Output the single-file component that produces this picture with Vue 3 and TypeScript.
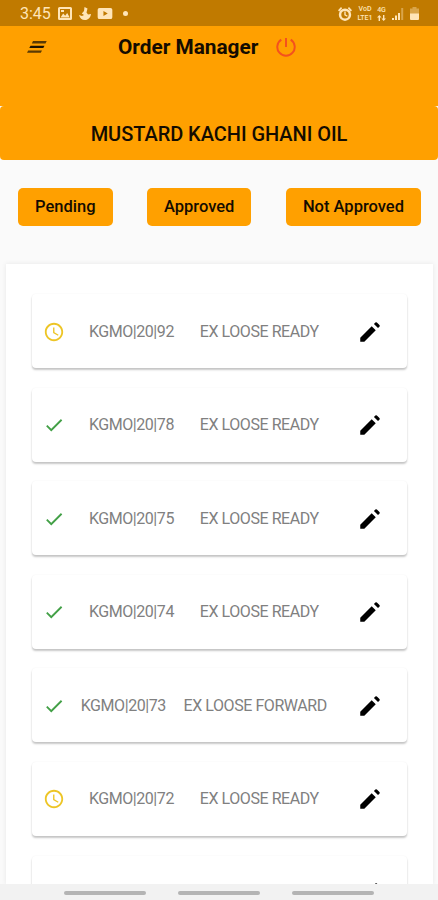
<script setup lang="ts">
type Status = 'pending' | 'approved'

interface Order {
  id: string
  type: string
  status: Status
}

const filters: string[] = ['Pending', 'Approved', 'Not Approved']

const pencil =
  'M3 17.250V21h3.750L17.310 10.440l-3.750-3.750L3 17.250zM20.710 7.040a1 1 0 0 0 0-1.410l-2.340-2.340a1 1 0 0 0-1.410 0l-1.330 1.330 3.750 3.750 1.330-1.330z'

const orders: Order[] = [
  { id: 'KGMO|20|92', type: 'EX LOOSE READY', status: 'pending' },
  { id: 'KGMO|20|78', type: 'EX LOOSE READY', status: 'approved' },
  { id: 'KGMO|20|75', type: 'EX LOOSE READY', status: 'approved' },
  { id: 'KGMO|20|74', type: 'EX LOOSE READY', status: 'approved' },
  { id: 'KGMO|20|73', type: 'EX LOOSE FORWARD', status: 'approved' },
  { id: 'KGMO|20|72', type: 'EX LOOSE READY', status: 'pending' },
]
</script>

<template>
  <div class="screen">
    <div class="status-bar">
      <span class="time">3:45</span>
      <svg class="s-image" viewBox="0 0 14 13"><path fill-rule="evenodd" d="M1.500 0h11A1.500 1.500 0 0 1 14 1.500v10a1.500 1.500 0 0 1-1.500 1.500h-11A1.500 1.500 0 0 1 0 11.500v-10A1.500 1.500 0 0 1 1.500 0zM2 2v9h10V2zM2.500 10.500l2.700-4 2 2.300 2-2.800 2.500 4.500zM3 3h3v2H3z" /></svg>
      <svg class="s-app" viewBox="0 0 12 13"><path d="M5.500 0 8.500 1.500 7.500 5.500 9 7.500 12 7c-.5 3.500-2.700 6-6 6S.8 11 0 8l3 1 2-1-2.200-1.500L5 4z" /></svg>
      <svg class="s-video" viewBox="0 0 16 12"><path fill-rule="evenodd" d="M2 0h12a2 2 0 0 1 2 2v8a2 2 0 0 1-2 2H2a2 2 0 0 1-2-2V2a2 2 0 0 1 2-2zm4.300 3.200v5.600L11 6z" /></svg>
      <span class="dot"></span>
      <span class="spacer"></span>
      <svg class="s-alarm" viewBox="0 0 14 14"><path fill-rule="evenodd" d="M7 1.500a6.200 6.200 0 1 1 0 12.400A6.200 6.200 0 0 1 7 1.500zm0 2.500a3.700 3.700 0 1 0 0 7.400A3.700 3.700 0 0 0 7 4zM6.300 4.500h1.400v3l2 1.300-.7 1-2.700-1.600zM0 3.200 3 .1l1.200 1.200L1.200 4.400zM14 3.200 11 .1 9.800 1.300l3 3.100z" /></svg>
      <span class="net volte"><b>VoD</b><b>LTE1</b></span>
      <span class="net data">
        <b>4G</b>
        <svg viewBox="0 0 9 6"><path d="M2.300 0 4.600 2.500H3V6H1.600V2.500H0zM6.700 6 4.400 3.500H6V0h1.400v3.500H9z" /></svg>
      </span>
      <svg class="s-signal" viewBox="0 0 12 12"><path d="M0 10h2v2H0zM3 7.500h2V12H3zM6 5h2v7H6z" /><path opacity=".4" d="M9.200 0h2v12h-2z" /></svg>
      <svg class="s-battery" viewBox="0 0 9 13"><path opacity=".4" d="M2.500 0h4v1.500H9V7H0V1.500h2.500z" /><path d="M0 6.500h9V12a1 1 0 0 1-1 1H1a1 1 0 0 1-1-1z" /></svg>
    </div>

    <header class="app-bar">
      <svg class="menu" viewBox="0 0 20 12"><path d="M6 0h13.700l-1.200 2.400H4.800zM1.200 9.400H15l-1.200 2.400H0z" /><path class="mid" d="M3.500 4.700h14l-1.200 2.400h-14z" /></svg>
      <h1>Order Manager</h1>
      <svg class="power" viewBox="0 0 20 20"><path d="M10 1v9M5.300 2.700a8.700 8.700 0 1 0 9.400 0" /></svg>
    </header>

    <h2 class="product">MUSTARD KACHI GHANI OIL</h2>

    <nav class="filters">
      <button v-for="f in filters" :key="f" type="button">{{ f }}</button>
    </nav>

    <main class="panel">
      <article v-for="o in orders" :key="o.id" class="card">
        <svg v-if="o.status === 'pending'" class="state pending" viewBox="0 0 24 24"><path d="M11.990 2C6.470 2 2 6.480 2 12s4.470 10 9.990 10C17.520 22 22 17.520 22 12S17.520 2 11.990 2zM12 20c-4.420 0-8-3.580-8-8s3.580-8 8-8 8 3.580 8 8-3.580 8-8 8zm.5-13H11v6l5.250 3.150.75-1.230-4.500-2.670z" /></svg>
        <svg v-else class="state approved" viewBox="0 0 24 24"><path d="M9 16.170 4.830 12l-1.420 1.410L9 19 21 7l-1.410-1.410z" /></svg>
        <div class="info">
          <span>{{ o.id }}</span>
          <span>{{ o.type }}</span>
        </div>
        <svg class="edit" viewBox="0 0 24 24"><path :d="pencil" /></svg>
      </article>
      <article class="card">
        <div class="info"></div>
        <svg class="edit" viewBox="0 0 24 24"><path :d="pencil" /></svg>
      </article>
    </main>

    <footer class="gesture-bar"><i></i><i></i><i></i></footer>
  </div>
</template>

<style>
body {
  margin: 0;
}
</style>

<style scoped>
.screen {
  display: flex;
  flex-direction: column;
  width: 438px;
  height: 900px;
  overflow: hidden;
  background: #fafafa;
  font-family: Roboto, "Liberation Sans", sans-serif;
}

svg {
  display: block;
  flex: none;
}

.status-bar {
  display: flex;
  align-items: center;
  flex: none;
  box-sizing: border-box;
  height: 26px;
  padding: 1px 19px 0 20px;
  background: #c07a00;
  color: #ffe5b8;
  fill: #ffe5b8;
}

.time {
  width: 38px;
  font-size: 16px;
  line-height: 24px;
}

.s-image { width: 14px; height: 13px; }
.s-app { width: 12px; height: 13px; margin-left: 7px; }
.s-video { width: 16px; height: 11px; margin-left: 6px; }

.dot {
  width: 5px;
  height: 5px;
  margin-left: 10px;
  border-radius: 50%;
  background: #ffe5b8;
}

.spacer { flex: 1; }
.s-alarm { width: 14px; height: 14px; }

.net {
  display: flex;
  flex-direction: column;
  align-items: center;
  font-size: 7px;
  line-height: 8.500px;
}

.net b { font-weight: 500; }
.volte { width: 18px; margin-left: 4px; }
.data { width: 11px; margin-left: 2px; }
.data svg { width: 9px; height: 6px; }
.s-signal { width: 12px; height: 12px; margin-left: 5px; }
.s-battery { width: 9px; height: 13px; margin-left: 6px; }

.app-bar {
  display: flex;
  align-items: center;
  flex: none;
  box-sizing: border-box;
  height: 80px;
  padding: 0 27px 38px;
  background: #ffa000;
}

.menu {
  width: 20px;
  height: 12px;
  fill: #5a3a03;
}

.menu .mid { fill: #1c1200; }

h1 {
  width: 158px;
  margin: 0 0 0 71px;
  font-size: 20.800px;
  font-weight: 700;
  line-height: 28px;
  white-space: nowrap;
  color: #140c00;
}

.power {
  width: 20px;
  height: 20px;
  fill: none;
  stroke: #f4511e;
  stroke-width: 2;
}

.product {
  flex: none;
  height: 54px;
  margin: 0;
  border-radius: 4px;
  background: #ffa000;
  color: #140c00;
  font-size: 20px;
  font-weight: 500;
  letter-spacing: -0.050px;
  line-height: 56px;
  text-align: center;
}

.filters {
  display: flex;
  justify-content: space-between;
  flex: none;
  padding: 28px 17px 38px 18px;
}

.filters button {
  height: 38px;
  padding: 0 17px;
  border: 0;
  border-radius: 5px;
  background: #ffa000;
  color: #140c00;
  font: 500 16.500px/38px Roboto, "Liberation Sans", sans-serif;
  white-space: nowrap;
}

.panel {
  display: flex;
  flex-direction: column;
  gap: 19.600px;
  flex: 1;
  min-height: 0;
  box-sizing: border-box;
  margin: 0 5px 0 6px;
  padding: 30px 26px 0;
  overflow: hidden;
  background: #fff;
  box-shadow: 0 0 5px rgba(0, 0, 0, 0.08);
}

.card {
  display: flex;
  align-items: center;
  flex: none;
  box-sizing: border-box;
  height: 74px;
  padding: 1px 24px 0 10.500px;
  border-radius: 4px;
  background: #fff;
  box-shadow: 0 2px 2px rgba(0, 0, 0, 0.22), 0 0 2px rgba(0, 0, 0, 0.05);
}

.state { width: 22px; height: 22px; }
.pending { fill: #edc526; }
.approved { fill: #43a047; }

.info {
  display: flex;
  justify-content: space-evenly;
  flex: 1;
  margin: 0 12.500px 0 -1.500px;
  color: #808080;
  font-size: 16px;
  letter-spacing: -0.440px;
  line-height: 24px;
  white-space: nowrap;
}

.edit {
  width: 26px;
  height: 26px;
  fill: #000;
}

.gesture-bar {
  display: flex;
  justify-content: center;
  gap: 32px;
  position: relative;
  flex: none;
  height: 16px;
  background: #f2f2f2;
}

.gesture-bar i {
  width: 82px;
  height: 4px;
  margin-top: 7px;
  border-radius: 2px;
  background: #b4b4b4;
}
</style>
